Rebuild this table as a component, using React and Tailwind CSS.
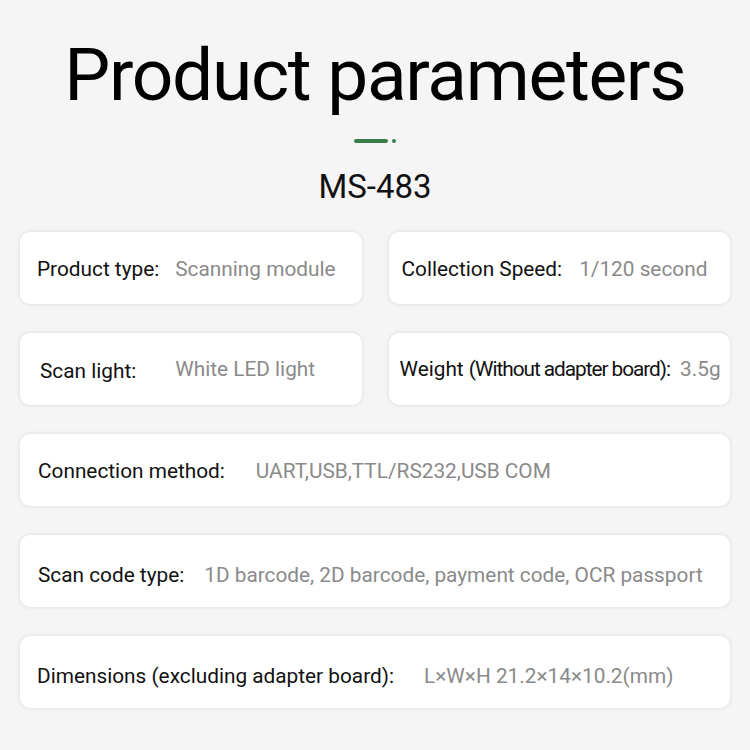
import React from 'react';

// one parameter card: label in black, value in grey
function ParamCard({ label, value, gap, className = '', labelClass = '', valueClass = '' }) {
  return (
    <div className={`h-[72px] bg-white rounded-[10px] shadow-[0_0_4px_rgba(0,0,0,0.12)] flex items-center ${className}`}>
      <span className={`text-[#111] whitespace-nowrap ${labelClass}`}>{label}</span>
      <span className={`text-[#8a8a8a] whitespace-nowrap ${valueClass}`} style={{ marginLeft: gap }}>
        {value}
      </span>
    </div>
  );
}

export default function App() {
  return (
    <div
      className="w-[750px] h-[750px] bg-[#f5f5f5] overflow-hidden"
      style={{ fontFamily: 'Roboto, "Liberation Sans", sans-serif' }}
    >
      <h1 className="pt-[31px] text-center text-[73px] leading-[88px] text-black tracking-[-1.3px]">
        Product parameters
      </h1>

      <div className="mt-[20px] flex justify-center items-center gap-[4px]">
        <div className="w-[34px] h-[4px] rounded-full bg-[#3a7d4a]" />
        <div className="w-[4px] h-[4px] rounded-full bg-[#3a7d4a]" />
      </div>

      <p className="mt-[22px] text-center text-[33px] leading-[44px] text-[#111]">MS-483</p>

      <div className="mt-[23px] px-[20px] flex flex-col gap-[29px] text-[20.8px]">
        <div className="grid grid-cols-2 gap-[27px]">
          <ParamCard label="Product type:" value="Scanning module" gap={16} className="pl-[17px] pt-[3px]" />
          <ParamCard label="Collection Speed:" value="1/120 second" gap={17} className="pl-[13px] pt-[3px]" />
        </div>
        <div className="grid grid-cols-2 gap-[27px]">
          <ParamCard
            label="Scan light:"
            value="White LED light"
            gap={39}
            className="pl-[20px] pt-[2px]"
            labelClass="translate-y-[2px]"
          />
          <ParamCard
            label={
              <>
                Weight <span className="tracking-[-0.05em]">(Without adapter board):</span>
              </>
            }
            value="3.5g"
            gap={10}
            className="pl-[11px] pt-[2px]"
          />
        </div>
        <ParamCard label="Connection method:" value="UART,USB,TTL/RS232,USB COM" gap={31} className="pl-[18px] pt-[4px]" />
        <ParamCard
          label="Scan code type:"
          value="1D barcode, 2D barcode, payment code, OCR passport"
          gap={20}
          className="pl-[18px] pt-[9px]"
        />
        <ParamCard
          label="Dimensions (excluding adapter board):"
          value="L×W×H 21.2×14×10.2(mm)"
          gap={30}
          className="pl-[17px] pt-[9px]"
        />
      </div>
    </div>
  );
}
